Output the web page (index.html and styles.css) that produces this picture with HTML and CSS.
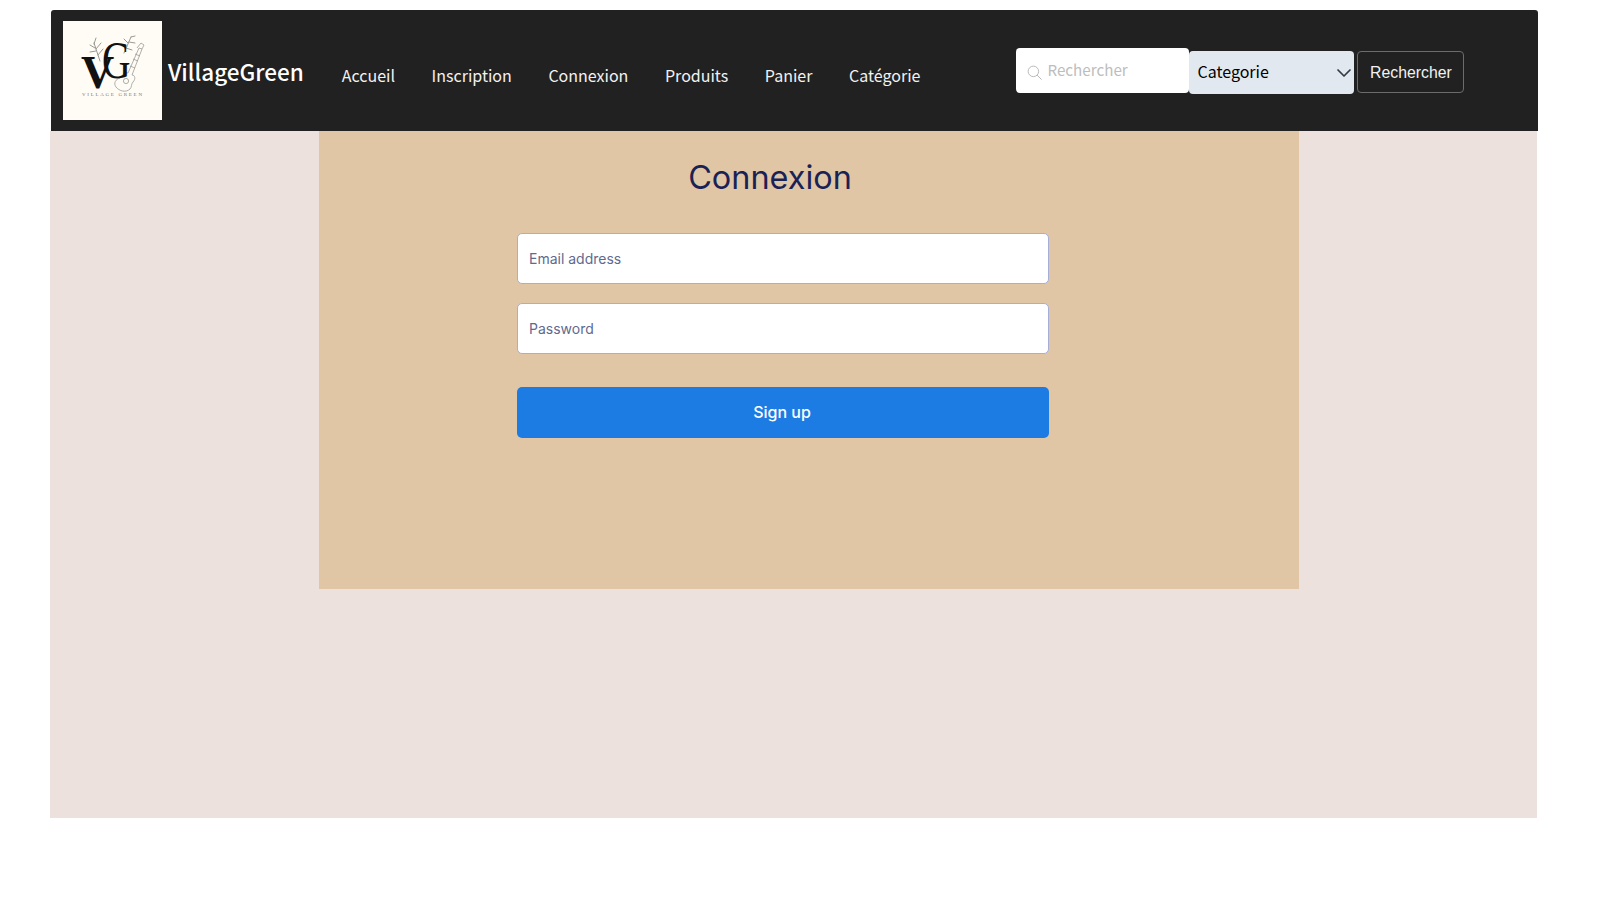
FILE: index.html
```html
<!DOCTYPE html>
<html lang="fr">
<head>
    <meta charset="utf-8">
    <title>VillageGreen - Connexion</title>
    <link rel="stylesheet" href="styles.css">
</head>
<body>
    <!-- Top navigation -->
    <header class="navbar">
        <a class="brand" href="#">
            <svg class="brand-logo" viewBox="0 0 99 99" width="99" height="99" role="img" aria-label="VillageGreen">
                <rect width="99" height="99" fill="#fffcf6"/>
                <!-- branches -->
                <g fill="none" stroke="#9a9a94" stroke-width="1" stroke-linecap="round">
                    <path d="M37 40 L31 22 M32 27 L27 24 M33 30 L27 31 M31 23 L33 17 M33 28 L38 22 M35 34 L40 28"/>
                    <path d="M61 32 L68 16 M65 22 L61 18 M64 25 L59 25 M68 16 L72 15 M66 21 L72 22 M63 27 L69 29"/>
                </g>
                <!-- guitar -->
                <g fill="none" stroke="#9a9a94" stroke-width="0.8">
                    <path d="M65 52 L76 27 L79 28 L69 54"/>
                    <path d="M74 27 L78 22 L81 24 L79 28"/>
                    <path d="M65 52 C60 51 59 55 57 57 C53 58 50 62 53 66 C56 70 63 72 67 68 C69 66 68 63 70 61 C73 58 72 54 69 54"/>
                    <circle cx="63" cy="60" r="2.6"/>
                    <path d="M67 45 L72 47 M70 38 L75 40 M72 33 L77 35"/>
                </g>
                <text class="logo-letter logo-letter-bold" x="18" y="67" font-size="46">V</text>
                <text class="logo-letter" transform="translate(39 57) scale(0.76 1)" font-size="52">G</text>
                <text class="logo-caption" x="19" y="75" font-size="5" textLength="60">VILLAGE GREEN</text>
            </svg>
            <span class="brand-name">VillageGreen</span>
        </a>

        <nav class="nav-links">
            <a href="#">Accueil</a>
            <a href="#">Inscription</a>
            <a href="#">Connexion</a>
            <a href="#">Produits</a>
            <a href="#">Panier</a>
            <a href="#">Catégorie</a>
        </nav>

        <form class="search-form">
            <div class="search-box">
                <svg class="search-icon" viewBox="0 0 16 16" width="15" height="15" fill="none" stroke="#b5b5b5" stroke-width="1">
                    <circle cx="6.8" cy="6.8" r="5.6"/>
                    <path d="M11 11 L15.3 15.3" stroke-linecap="round"/>
                </svg>
                <input class="search-input" type="text" placeholder="Rechercher">
            </div>
            <div class="category-box">
                <select class="category-select">
                    <option>Categorie</option>
                </select>
                <svg class="category-arrow" viewBox="0 0 16 16" width="16" height="16" fill="none" stroke="#343a40" stroke-width="1.7" stroke-linecap="round" stroke-linejoin="round">
                    <path d="M2 5 L8 11 L14 5"/>
                </svg>
            </div>
            <button class="search-button" type="button">Rechercher</button>
        </form>
    </header>

    <!-- Login card -->
    <main class="content">
        <section class="login-card">
            <h1 class="login-title">Connexion</h1>
            <form class="login-form">
                <input class="login-input" type="email" placeholder="Email address">
                <input class="login-input" type="password" placeholder="Password">
                <button class="login-button" type="button">Sign up</button>
            </form>
        </section>
    </main>
</body>
</html>
```

FILE: styles.css
```css
body {
    margin: 0;
    background-color: #fff;
    font-family: 'Inter', sans-serif;
}

.navbar {
    display: flex;
    align-items: center;
    box-sizing: border-box;
    width: 1487px;
    height: 121px;
    margin: 10px 0 0 51px;
    padding-left: 12px;
    background-color: #212121;
    border-radius: 3px 3px 0 0;
    font-family: 'Noto Sans CJK SC', sans-serif;
}

.brand {
    display: flex;
    align-items: center;
    color: #fff;
    text-decoration: none;
}

.brand-logo {
    display: block;
    flex: none;
}

.logo-letter {
    font-family: 'Liberation Serif', serif;
    font-weight: 400;
    fill: #111;
}

.logo-letter-bold {
    font-weight: 700;
}

.logo-caption {
    font-family: 'Liberation Serif', serif;
    fill: #77776f;
}

.brand-name {
    margin: 1px 0 0 6px;
    font-size: 22.5px;
    font-weight: 500;
}

.nav-links {
    display: flex;
    gap: 36.6px;
    margin: 9px 0 0 38px;
}

.nav-links a {
    color: #f2f2f2;
    font-size: 16px;
    text-decoration: none;
}

.search-form {
    display: flex;
    align-items: flex-start;
    margin: 3px 0 0 96px;
}

.search-box {
    display: flex;
    align-items: center;
    box-sizing: border-box;
    width: 173px;
    height: 45px;
    margin-top: -3px;
    padding-left: 11px;
    background-color: #fff;
    border-radius: 4px;
}

.search-icon {
    flex: none;
    margin-top: 4px;
}

.search-input {
    width: 130px;
    margin: 0 0 2px 5px;
    padding: 0;
    border: none;
    outline: none;
    background: none;
    font-family: 'Noto Sans CJK SC', sans-serif;
    font-size: 15.2px;
}

.search-input::placeholder {
    color: #bdbdbd;
}

.category-box {
    position: relative;
    width: 165px;
    height: 43px;
}

.category-select {
    display: block;
    box-sizing: border-box;
    width: 100%;
    height: 100%;
    padding: 0 8px 2px;
    border: none;
    border-radius: 4px;
    appearance: none;
    background-color: #e2e8f0;
    color: #000;
    font-family: 'Noto Sans CJK SC', sans-serif;
    font-size: 16px;
}

.category-arrow {
    position: absolute;
    top: 14px;
    right: 2px;
    pointer-events: none;
}

.search-button {
    box-sizing: border-box;
    width: 107px;
    height: 42px;
    margin-left: 3px;
    padding: 2px 0 0;
    border: 1px solid #6c6c6c;
    border-radius: 4px;
    background: none;
    color: #f2f2f2;
    font-family: 'Liberation Sans', sans-serif;
    font-size: 15.8px;
}

.content {
    box-sizing: border-box;
    width: 1487px;
    height: 687px;
    margin-left: 50px;
    padding-left: 269px;
    background-color: #ece1dc;
}

.login-card {
    box-sizing: border-box;
    width: 980px;
    height: 458px;
    padding-top: 27px;
    background-color: #e0c6a5;
}

.login-title {
    width: 902px;
    margin: 0;
    color: #1a2255;
    font-size: 32.4px;
    font-weight: 400;
    line-height: 40px;
    text-align: center;
}

.login-form {
    display: flex;
    flex-direction: column;
    width: 532px;
    margin: 35px 0 0 198px;
}

.login-input {
    box-sizing: border-box;
    height: 51px;
    margin-bottom: 19px;
    padding: 0 11px;
    border: 1px solid #a4aed8;
    border-radius: 5px;
    background-color: #fff;
    font-family: 'Inter', sans-serif;
    font-size: 14px;
}

.login-input::placeholder {
    color: #5f6a8f;
}

.login-button {
    height: 51px;
    margin-top: 14px;
    padding: 0 2px 2px 0;
    border: none;
    border-radius: 5px;
    background-color: #1c7ce4;
    color: #fff;
    font-family: 'Inter', sans-serif;
    font-size: 16px;
    font-weight: 500;
}
```
